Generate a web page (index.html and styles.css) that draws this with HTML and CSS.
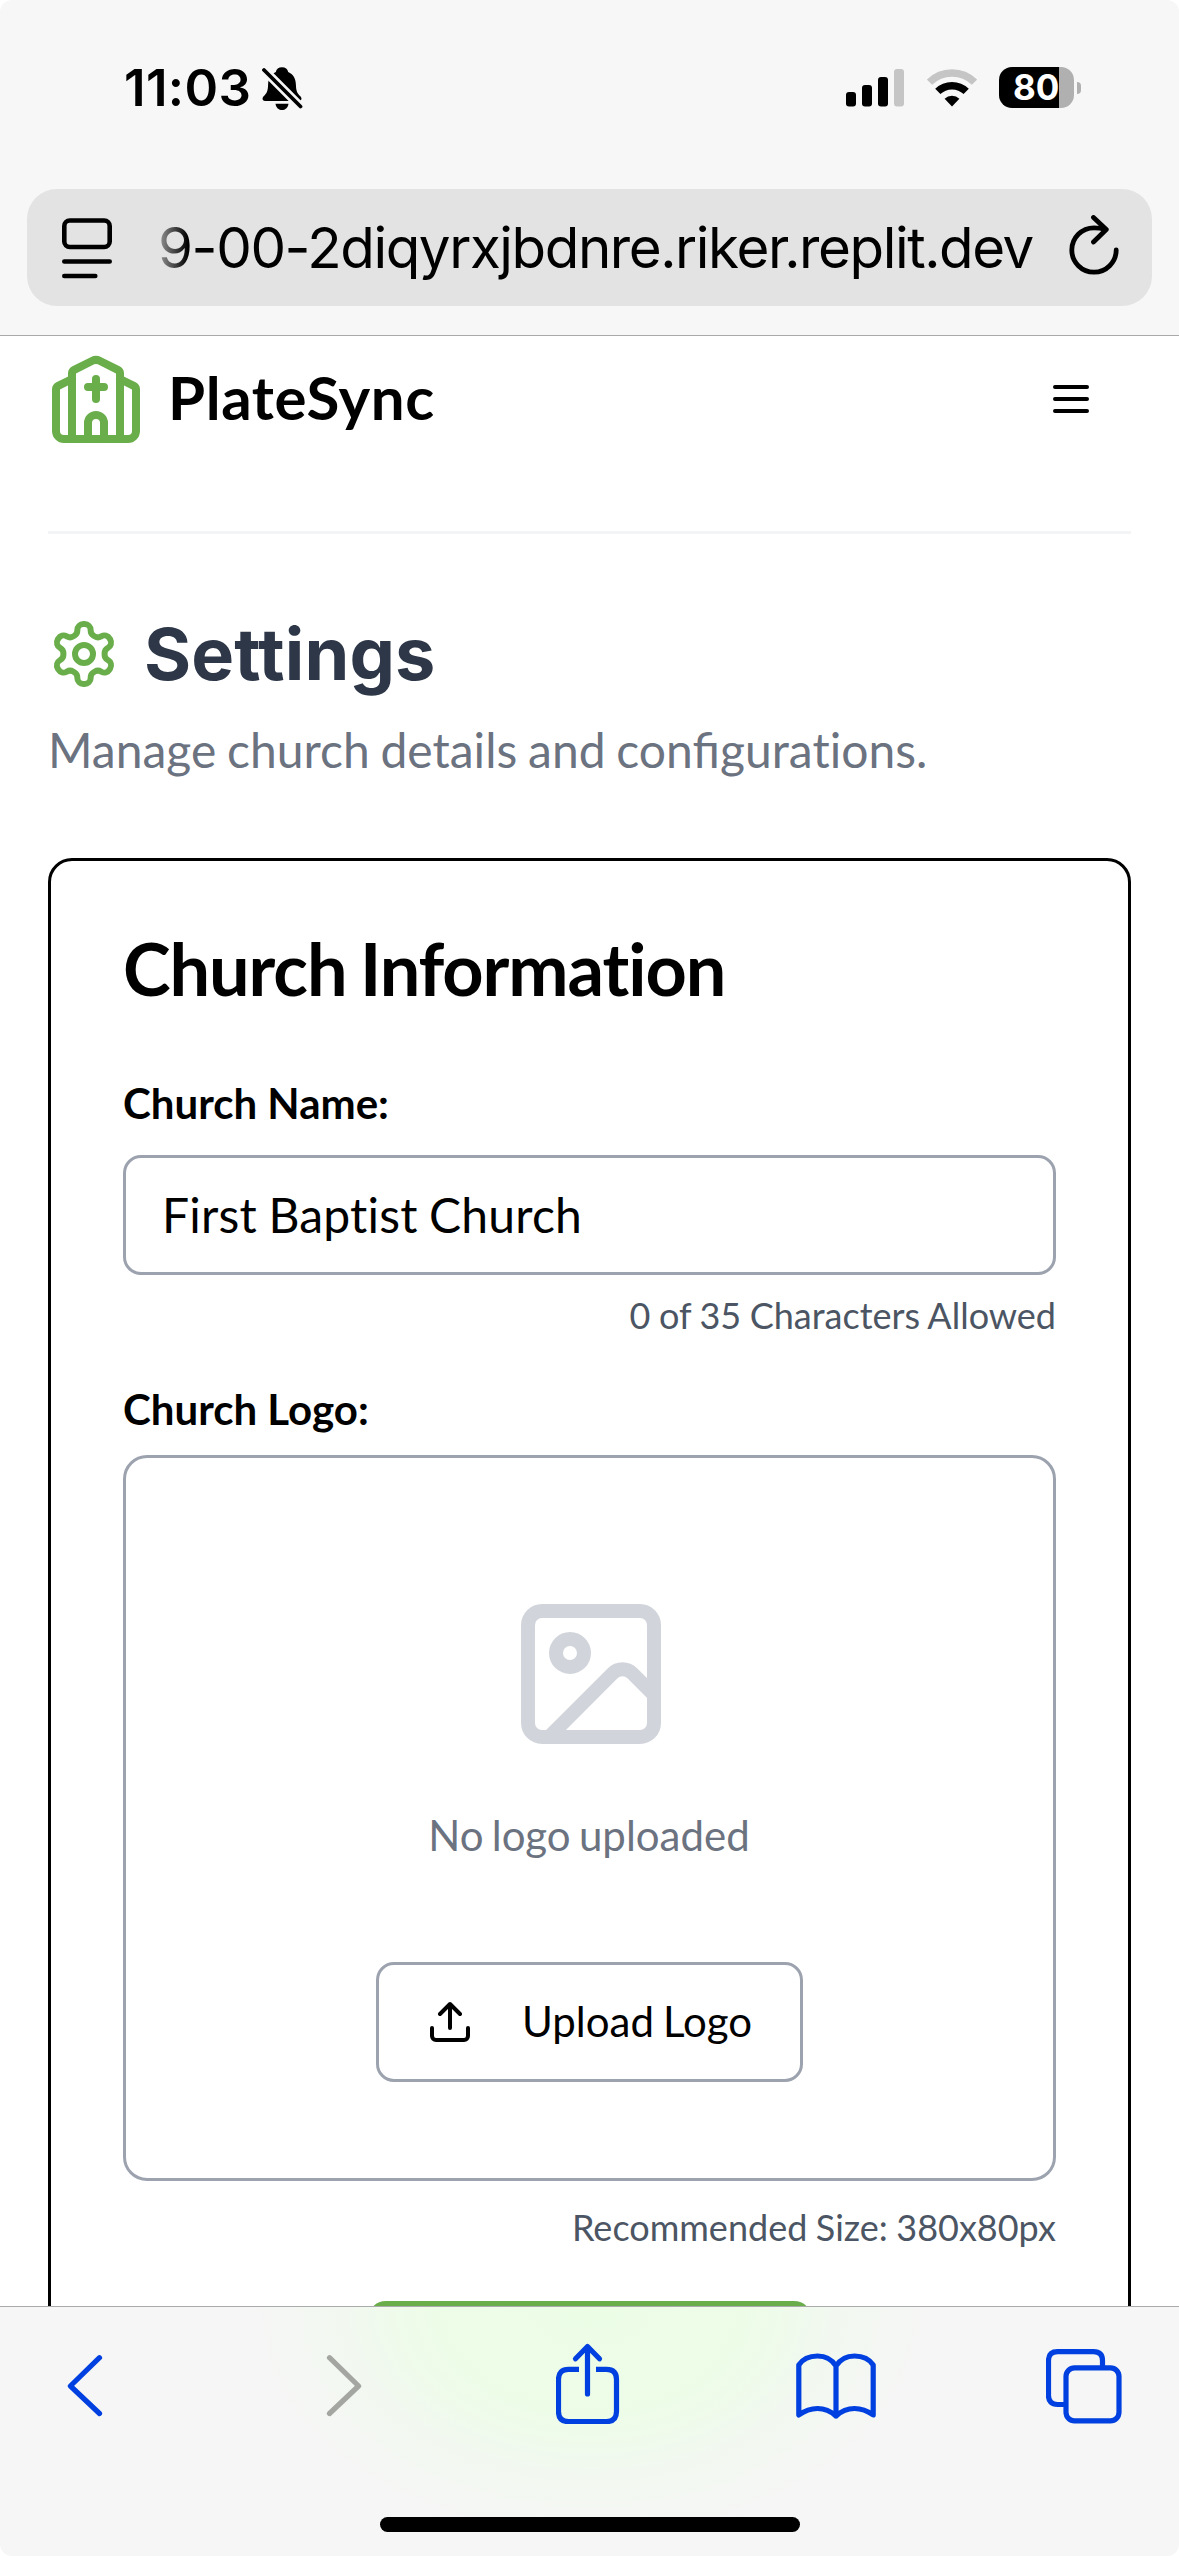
FILE: index.html
```html
<!DOCTYPE html>
<html lang="en">
<head>
<meta charset="utf-8">
<title>PlateSync Settings</title>
<link rel="stylesheet" href="styles.css">
</head>
<body>
<div class="phone">
  <header class="chrome-top">
    <div class="status">
      <span class="time">11:03</span>
      <svg class="bell" width="42" height="46" viewBox="0 0 42 46">
        <path d="M20 .300c3.500 0 5.600 2 6.200 4.700 5 2.200 7.500 6.600 7.700 12.500.2 6.500 1.200 8.800 4.500 11.700 1.800 1.700 1.400 4.700-1.600 4.700H3.200c-3 0-3.400-3-1.600-4.700C4.900 26.300 5.900 24 6.100 17.500 6.300 11.600 8.800 7.200 13.800 5 14.400 2.300 16.500.300 20 .300z"/>
        <path d="M13.500 36.700h13c-.6 4-3.200 6.300-6.500 6.300s-5.900-2.300-6.500-6.300z"/>
        <path class="bell-gap" d="M0 1 40 41"/>
        <path class="bell-slash" d="M2 3 38.500 39.500"/>
      </svg>
      <svg class="signal" width="58" height="38" viewBox="0 0 58 38">
        <rect x="0" y="23" width="10" height="14.500" rx="3"/>
        <rect x="16" y="16" width="10" height="21.500" rx="3"/>
        <rect x="32" y="8" width="10" height="29.500" rx="3"/>
        <rect class="dim" x="48" y="0" width="10" height="37.500" rx="3"/>
      </svg>
      <svg class="wifi" width="50" height="38" viewBox="0 0 50 38">
        <path class="wifi-far" d="M2.500 13.200a32 32 0 0 1 45 0"/>
        <path class="wifi-near" d="M10.800 22.400a20.500 20.500 0 0 1 28.400 0"/>
        <path d="M25 37.500l-7.400-7.700a10.500 10.500 0 0 1 14.800 0z"/>
      </svg>
      <div class="battery"><span>80</span></div>
      <div class="battery-tip"></div>
    </div>
    <div class="address">
      <svg class="reader" width="50" height="61" viewBox="0 0 50 61">
        <rect x="2.300" y="2.500" width="45.400" height="26.500" rx="5.500"/>
        <path d="M2.300 43.500h45.400M2.300 58h31"/>
      </svg>
      <span class="url">9-00-2diqyrxjbdnre.riker.replit.dev</span>
      <svg class="reload" width="52" height="62" viewBox="0 0 52 62">
        <path d="M36.500 14.300C33.600 13.200 30 12.800 26 12.800A22.200 22.200 0 1 0 48.200 35M25.500 2.500 38.300 14.500 25.500 27"/>
      </svg>
    </div>
  </header>

  <main class="page">
    <div class="brand-row">
      <svg class="church" width="96" height="96" viewBox="0 0 24 24">
        <path d="m18 7 3.447 1.724a1 1 0 0 1 .553.894V20a2 2 0 0 1-2 2H4a2 2 0 0 1-2-2V9.618a1 1 0 0 1 .553-.894L6 7"/>
        <path d="M14 22v-4a2 2 0 0 0-4 0v4"/>
        <path d="M18 22V5.618a1 1 0 0 0-.553-.894l-4.553-2.277a2 2 0 0 0-1.788 0L6.553 4.724A1 1 0 0 0 6 5.618V22M12 7v5M10 9h4"/>
      </svg>
      <span class="brand">PlateSync</span>
      <svg class="menu" width="48" height="48" viewBox="0 0 24 24"><path d="M4 6h16M4 12h16M4 18h16"/></svg>
    </div>

    <div class="heading">
      <svg class="gear" width="72" height="72" viewBox="0 0 24 24">
        <path d="M12.220 2h-.440a2 2 0 0 0-2 2v.180a2 2 0 0 1-1 1.730l-.430.250a2 2 0 0 1-2 0l-.150-.080a2 2 0 0 0-2.730.730l-.220.380a2 2 0 0 0 .730 2.730l.150.100a2 2 0 0 1 1 1.720v.510a2 2 0 0 1-1 1.740l-.150.090a2 2 0 0 0-.730 2.730l.220.380a2 2 0 0 0 2.730.730l.150-.080a2 2 0 0 1 2 0l.430.250a2 2 0 0 1 1 1.730V20a2 2 0 0 0 2 2h.440a2 2 0 0 0 2-2v-.180a2 2 0 0 1 1-1.730l.430-.250a2 2 0 0 1 2 0l.150.080a2 2 0 0 0 2.730-.730l.220-.390a2 2 0 0 0-.730-2.730l-.150-.080a2 2 0 0 1-1-1.740v-.500a2 2 0 0 1 1-1.740l.150-.090a2 2 0 0 0 .730-2.730l-.220-.380a2 2 0 0 0-2.730-.730l-.150.080a2 2 0 0 1-2 0l-.430-.250a2 2 0 0 1-1-1.730V4a2 2 0 0 0-2-2z"/>
        <circle cx="12" cy="12" r="3"/>
      </svg>
      <h1>Settings</h1>
    </div>
    <p class="lead">Manage church details and configura<span class="plain">ti</span>ons.</p>

    <section class="card">
      <h2>Church Information</h2>
      <div class="label">Church Name:</div>
      <div class="input">First Baptist Church</div>
      <div class="hint">0 of 35 Characters Allowed</div>
      <div class="label label-logo">Church Logo:</div>
      <div class="dropzone">
        <svg class="picture" width="168" height="168" viewBox="0 0 24 24">
          <rect x="3" y="3" width="18" height="18" rx="2"/>
          <circle cx="9" cy="9" r="2"/>
          <path d="m21 15-3.086-3.086a2 2 0 0 0-2.828 0L6 21"/>
        </svg>
        <div class="empty">No logo uploaded</div>
        <div class="upload">
          <svg width="48" height="48" viewBox="0 0 24 24"><path d="M21 15v4a2 2 0 0 1-2 2H5a2 2 0 0 1-2-2v-4M17 8l-5-5-5 5M12 3v12"/></svg>
          <span>Upload Logo</span>
        </div>
      </div>
      <div class="hint hint-size">Recommended Size: 380x80px</div>
      <div class="save"></div>
    </section>
  </main>

  <footer class="chrome-bottom">
    <nav class="toolbar">
      <svg class="back" width="36" height="84" viewBox="0 0 36 84"><path d="M32.500 17.700 3.400 46l29.100 27.500"/></svg>
      <svg class="forward" width="36" height="84" viewBox="0 0 36 84"><path d="M3.500 17.700 32.600 46 3.500 73.500"/></svg>
      <svg class="share" width="64" height="84" viewBox="0 0 64 84"><path class="butt" d="M23 29.400H12.500c-6.500 0-10 3.500-10 10v32.200c0 6.500 3.500 10 10 10h38c6.500 0 10-3.500 10-10V39.400c0-6.500-3.500-10-10-10H40"/><path d="M31.500 54V6.500M19.500 18.800 31.500 6.500l12 12.300"/></svg>
      <svg class="book" width="80" height="84" viewBox="0 0 80 84"><path d="M40 76C34 70.500 28 68.500 21.500 68.500S9 70.500 2.800 75V25C7 18.500 14 16 21.500 16S36 19.500 40 26c4-6.500 11-10 18.500-10S73 18.500 77.200 25v50C71 70.500 65 68.500 58.500 68.500S46 70.500 40 76zM40 26v50"/></svg>
      <svg class="tabs" width="76" height="84" viewBox="0 0 76 84"><path class="butt" d="M18 64.500h-6.500c-6 0-9-3-9-9V20.700c0-6 3-9 9-9h36c6 0 9 3 9 9V27"/><rect x="20" y="27.800" width="53" height="53" rx="8.500"/></svg>
    </nav>
    <div class="home"></div>
  </footer>
</div>
</body>
</html>
```
FILE: styles.css
```css
* { box-sizing: border-box; margin: 0; }
body { width: 1179px; height: 2556px; background: #fff; font-family: Lato, sans-serif; color: #000; overflow: hidden; }
svg { display: block; flex: none; fill: none; stroke-linecap: round; stroke-linejoin: round; }
.phone { width: 1179px; height: 2556px; display: flex; flex-direction: column; overflow: hidden; }

/* Browser chrome, top */
.chrome-top { flex: none; height: 336px; background: #f7f7f7; border-bottom: 1px solid #a9a9a9; border-radius: 12px 12px 0 0; }
.status { height: 189px; padding: 67px 0 0 124px; display: flex; align-items: flex-start; font-family: Inter, sans-serif; }
.time { width: 138px; font-size: 51px; font-weight: 600; line-height: 42px; letter-spacing: 0.350px; white-space: nowrap; }
.bell { fill: #000; }
.bell-gap { stroke: #f7f7f7; stroke-width: 9px; }
.bell-slash { stroke: #000; stroke-width: 3.800px; }
.signal { margin: 2px 0 0 542px; fill: #000; }
.dim { fill: #c5c5c5; }
.wifi { margin: 2px 0 0 22.500px; fill: #000; }
.wifi path { stroke-linecap: butt; }
.wifi-far, .wifi-near { fill: none; stroke-width: 7.500px; }
.wifi-far { stroke: #c5c5c5; }
.wifi-near { stroke: #000; }
.battery { margin-left: 22.500px; width: 75px; height: 41px; border-radius: 13px; background: linear-gradient(90deg, #000 60px, #b0b0b0 60px); color: #fff; font-size: 35px; font-weight: 700; line-height: 41px; padding-left: 14px; }
.battery-tip { margin: 15px 0 0 3px; width: 4px; height: 12px; border-radius: 0 4px 4px 0; background: #b0b0b0; }
.address { margin: 0 27px; height: 117px; border-radius: 30px; background: #e3e3e3; display: flex; align-items: flex-start; padding-left: 35px; }
.reader { margin-top: 29px; stroke: #000; stroke-width: 4.600px; }
.url { margin-left: 46px; width: 910px; line-height: 117px; font-family: Inter, sans-serif; font-size: 56.500px; letter-spacing: -1.430px; white-space: nowrap; background: linear-gradient(90deg, #999 0, #000 30px); -webkit-background-clip: text; background-clip: text; color: transparent; }
.reload { margin-top: 26px; stroke: #000; stroke-width: 4.800px; }

/* Web page */
.page { flex: none; height: 1970px; padding: 15px 48px 0; overflow: hidden; }
.brand-row { height: 183px; display: flex; align-items: flex-start; border-bottom: 3px solid #f3f4f6; }
.church { stroke: #6aae4b; stroke-width: 2; }
.brand { margin-left: 24px; flex: 1; font-size: 60px; font-weight: 700; line-height: 92px; letter-spacing: 0.600px; }
.menu { margin: 24px 36px 0 0; stroke: #000; stroke-width: 2; }
.heading { margin-top: 72px; height: 96px; display: flex; align-items: center; gap: 24px; }
.gear { stroke: #6aae4b; stroke-width: 2; }
h1 { font-family: Inter, sans-serif; font-size: 72px; font-weight: 700; line-height: 96px; letter-spacing: 0.150px; color: #2d3748; }
.lead { margin-top: 12px; font-size: 48px; line-height: 72px; word-spacing: -1.500px; color: #6b7280; white-space: nowrap; }
.plain { font-variant-ligatures: none; }
.card { margin-top: 72px; height: 1600px; border: 3px solid #000; border-radius: 24px; padding: 71px 72px; font-variant-ligatures: none; }
h2 { font-size: 72px; font-weight: 700; line-height: 72px; letter-spacing: -1.080px; word-spacing: -3px; white-space: nowrap; }
.label { margin-top: 78px; font-size: 42px; font-weight: 700; line-height: 42px; }
.input { margin-top: 31px; height: 120px; border: 3px solid #9ca3af; border-radius: 18px; padding-left: 36px; font-size: 48px; line-height: 114px; letter-spacing: 0.200px; word-spacing: -1px; }
.hint { margin-top: 16px; font-size: 36px; line-height: 48px; text-align: right; word-spacing: -0.700px; color: #4b5563; }
.label-logo { margin-top: 49px; }
.dropzone { margin-top: 25px; height: 726px; border: 3px solid #9ca3af; border-radius: 24px; display: flex; flex-direction: column; align-items: center; padding-top: 132px; }
.picture { margin-left: 3px; stroke: #d1d5db; stroke-width: 2; }
.empty { margin: 47px 1px 0 0; font-size: 42px; line-height: 60px; word-spacing: -2.500px; color: #6b7280; }
.upload { margin-top: 97px; width: 427px; height: 120px; border: 3px solid #9ca3af; border-radius: 18px; display: flex; align-items: center; gap: 48px; padding-left: 47px; font-size: 42px; word-spacing: -1.600px; white-space: nowrap; }
.upload span { margin-top: -2px; }
.upload svg { stroke: #000; stroke-width: 2; }
.hint-size { margin-top: 22px; }
.save { margin: 50px auto 0; width: 444px; height: 120px; border-radius: 18px; background: #6aae4b; }

/* Browser chrome, bottom */
.chrome-bottom { flex: none; height: 250px; border-top: 1px solid #a9abac; border-radius: 0 0 12px 12px; background: radial-gradient(ellipse 350px 240px at 590px 0, #ecfde6 0, rgba(236,253,230,0.9) 45%, rgba(238,250,234,0.5) 70%, rgba(240,248,238,0) 100%), #f6f6f6; }
.toolbar { height: 210px; padding-top: 33px; display: flex; align-items: flex-start; stroke: #0040e0; stroke-width: 5.200px; }
.back { margin-left: 67px; }
.forward { margin-left: 222.500px; stroke: #a4a6a2; }
.share { margin-left: 194.500px; }
.book { margin-left: 176px; }
.tabs { margin-left: 170px; }
.butt { stroke-linecap: butt; }
.home { margin: 0 auto; width: 420px; height: 15px; border-radius: 8px; background: #000; }
```
